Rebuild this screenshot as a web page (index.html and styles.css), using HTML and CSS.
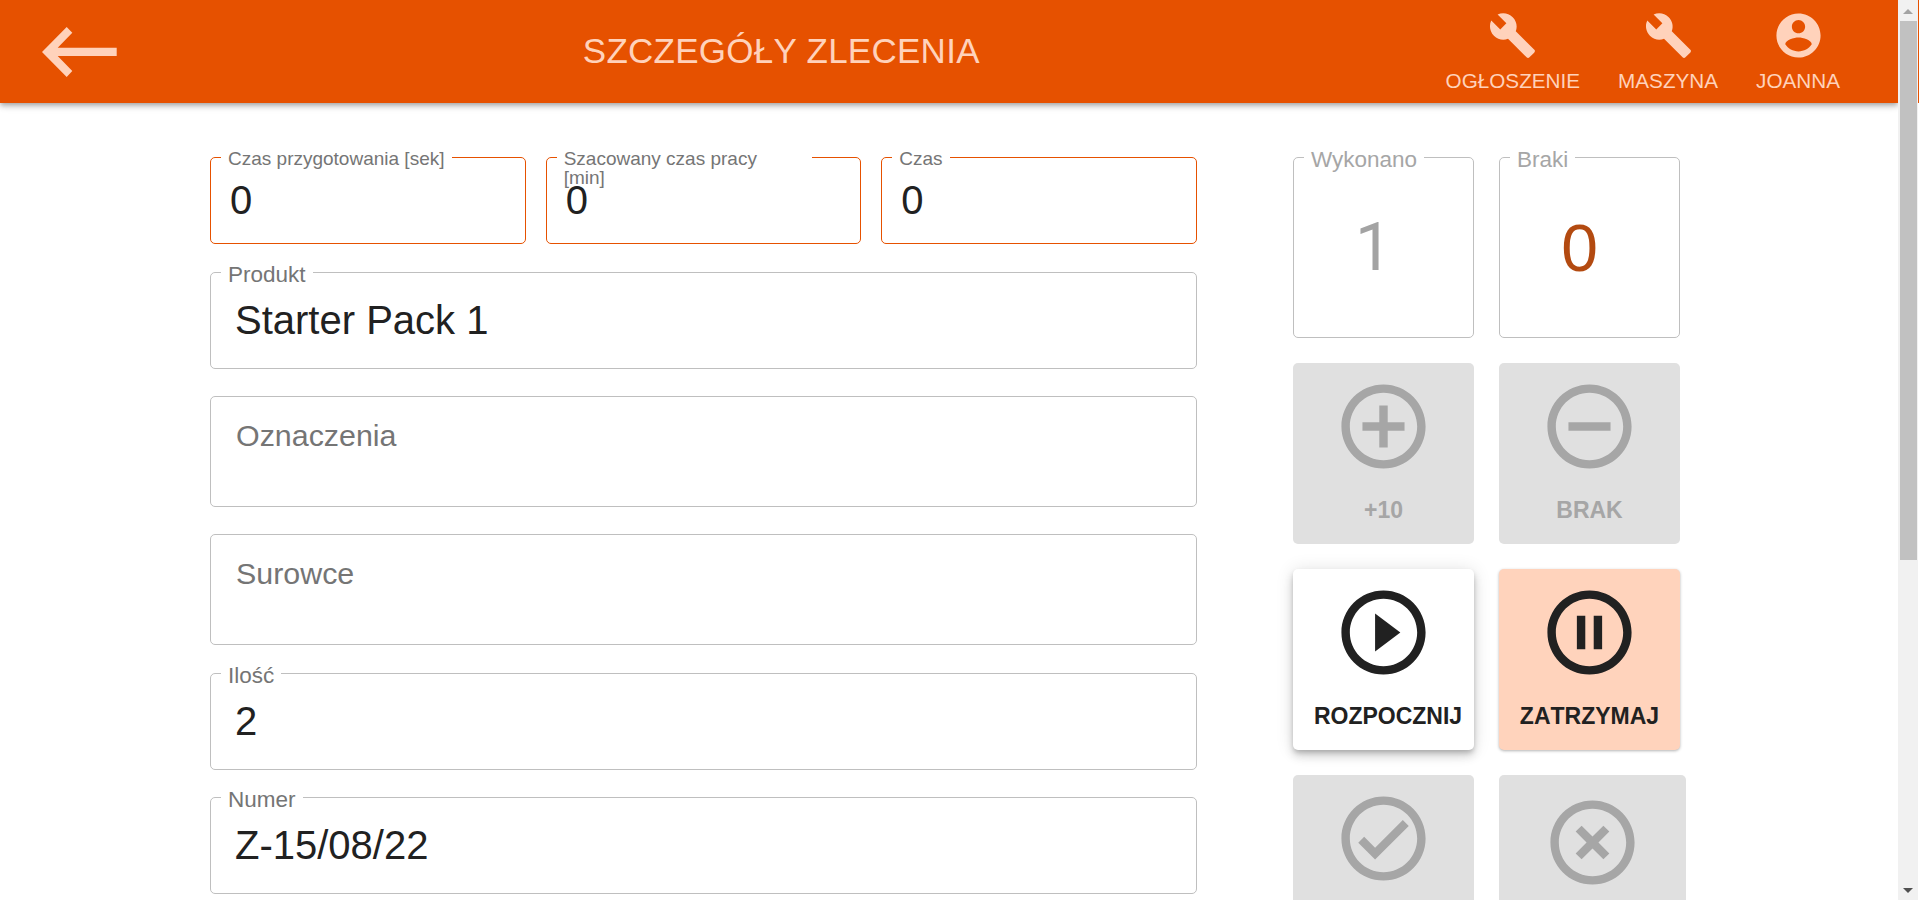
FILE: index.html
```html
<!DOCTYPE html>
<html lang="pl">
<head>
    <meta charset="UTF-8">
    <meta name="viewport" content="width=device-width, initial-scale=1.0">
    <title>Szczegóły zlecenia</title>
    <link rel="stylesheet" href="styles.css">
</head>
<body>
    <div class="window">
        <div class="page">
            <header class="app-bar">
                <button class="back-btn" aria-label="Wstecz">
                    <svg width="75" height="50" viewBox="22 16 75 50"><path d="M46.7 16l5.6 5.7-14.6 15h59v8.3h-59l14.6 15-5.6 6L22 41z"/></svg>
                </button>
                <h1 class="app-title">SZCZEGÓŁY ZLECENIA</h1>
                <nav class="app-nav">
                    <a class="nav-item">
                        <span class="nav-icon"><svg width="49" height="49" viewBox="0 0 24 24"><path d="M22.7 19l-9.1-9.1c.9-2.3.4-5-1.5-6.9-2-2-5-2.4-7.4-1.3L9 6 6 9 1.6 4.7C.4 7.1.9 10.1 2.9 12.1c1.9 1.9 4.6 2.4 6.9 1.5l9.1 9.1c.4.4 1 .4 1.4 0l2.3-2.3c.5-.4.5-1.1.1-1.4z"/></svg></span>
                        OGŁOSZENIE
                    </a>
                    <a class="nav-item">
                        <span class="nav-icon"><svg width="49" height="49" viewBox="0 0 24 24"><path d="M22.7 19l-9.1-9.1c.9-2.3.4-5-1.5-6.9-2-2-5-2.4-7.4-1.3L9 6 6 9 1.6 4.7C.4 7.1.9 10.1 2.9 12.1c1.9 1.9 4.6 2.4 6.9 1.5l9.1 9.1c.4.4 1 .4 1.4 0l2.3-2.3c.5-.4.5-1.1.1-1.4z"/></svg></span>
                        MASZYNA
                    </a>
                    <a class="nav-item">
                        <span class="nav-icon"><svg width="53" height="53" viewBox="0 0 24 24"><path d="M12 2C6.48 2 2 6.48 2 12s4.48 10 10 10 10-4.48 10-10S17.52 2 12 2zm0 3c1.66 0 3 1.34 3 3s-1.34 3-3 3-3-1.34-3-3 1.34-3 3-3zm0 14.2c-2.5 0-4.71-1.28-6-3.22.03-1.99 4-3.08 6-3.08 1.99 0 5.97 1.09 6 3.08-1.29 1.94-3.5 3.22-6 3.22z"/></svg></span>
                        JOANNA
                    </a>
                </nav>
            </header>

            <main class="content">
                <section class="form-col">
                    <div class="field-row">
                        <div class="field field-time">
                            <span class="field-value">0</span>
                            <span class="field-label">Czas przygotowania [sek]</span>
                        </div>
                        <div class="field field-time">
                            <span class="field-value">0</span>
                            <span class="field-label label-wrapped">Szacowany czas pracy<br>[min]</span>
                        </div>
                        <div class="field field-time">
                            <span class="field-value">0</span>
                            <span class="field-label">Czas</span>
                        </div>
                    </div>
                    <div class="field">
                        <span class="field-value">Starter Pack 1</span>
                        <span class="field-label">Produkt</span>
                    </div>
                    <div class="field field-multi">Oznaczenia</div>
                    <div class="field field-multi">Surowce</div>
                    <div class="field">
                        <span class="field-value">2</span>
                        <span class="field-label">Ilość</span>
                    </div>
                    <div class="field">
                        <span class="field-value">Z-15/08/22</span>
                        <span class="field-label">Numer</span>
                    </div>
                </section>

                <section class="side-col">
                    <div class="tile-row">
                        <div class="stat">
                            <span class="stat-value stat-done">1</span>
                            <span class="stat-label">Wykonano</span>
                        </div>
                        <div class="stat">
                            <span class="stat-value stat-bad">0</span>
                            <span class="stat-label">Braki</span>
                        </div>
                    </div>
                    <div class="tile-row">
                        <button class="action">
                            <svg width="101" height="101" viewBox="0 0 24 24"><path d="M13 7h-2v4H7v2h4v4h2v-4h4v-2h-4V7zm-1-5C6.48 2 2 6.48 2 12s4.48 10 10 10 10-4.48 10-10S17.52 2 12 2zm0 18c-4.41 0-8-3.59-8-8s3.59-8 8-8 8 3.59 8 8-3.59 8-8 8z"/></svg>
                            <span class="action-label">+10</span>
                        </button>
                        <button class="action">
                            <svg width="101" height="101" viewBox="0 0 24 24"><path d="M7 11v2h10v-2H7zm5-9C6.48 2 2 6.48 2 12s4.48 10 10 10 10-4.48 10-10S17.52 2 12 2zm0 18c-4.41 0-8-3.59-8-8s3.59-8 8-8 8 3.59 8 8-3.59 8-8 8z"/></svg>
                            <span class="action-label">BRAK</span>
                        </button>
                    </div>
                    <div class="tile-row">
                        <button class="action action-start">
                            <svg width="101" height="101" viewBox="0 0 24 24"><path d="M10 16.5l6-4.5-6-4.5v9zM12 2C6.48 2 2 6.48 2 12s4.48 10 10 10 10-4.48 10-10S17.52 2 12 2zm0 18c-4.41 0-8-3.59-8-8s3.59-8 8-8 8 3.59 8 8-3.59 8-8 8z"/></svg>
                            <span class="action-label">ROZPOCZNIJ</span>
                        </button>
                        <button class="action action-pause">
                            <svg width="101" height="101" viewBox="0 0 24 24"><path d="M9 16h2V8H9v8zm3-14C6.48 2 2 6.48 2 12s4.48 10 10 10 10-4.48 10-10S17.52 2 12 2zm0 18c-4.41 0-8-3.59-8-8s3.59-8 8-8 8 3.59 8 8-3.59 8-8 8zm1-4h2V8h-2v8z"/></svg>
                            <span class="action-label">ZATRZYMAJ</span>
                        </button>
                    </div>
                    <div class="tile-row">
                        <button class="action">
                            <svg width="101" height="101" viewBox="0 0 24 24"><path d="M12 2C6.48 2 2 6.48 2 12s4.48 10 10 10 10-4.48 10-10S17.52 2 12 2zm0 18c-4.41 0-8-3.59-8-8s3.59-8 8-8 8 3.59 8 8-3.59 8-8 8zm4.59-12.42L10 14.17l-2.59-2.58L6 13l4 4 8-8z"/></svg>
                        </button>
                        <button class="action action-wide">
                            <svg width="101" height="101" viewBox="0 0 24 24"><path d="M14.59 8L12 10.59 9.41 8 8 9.41 10.59 12 8 14.59 9.41 16 12 13.41 14.59 16 16 14.59 13.41 12 16 9.41 14.59 8zM12 2C6.47 2 2 6.47 2 12s4.47 10 10 10 10-4.47 10-10S17.53 2 12 2zm0 18c-4.41 0-8-3.59-8-8s3.59-8 8-8 8 3.59 8 8-3.59 8-8 8z"/></svg>
                        </button>
                    </div>
                </section>
            </main>
        </div>

        <div class="scrollbar">
            <span class="arrow-up"></span>
            <span class="scroll-thumb"></span>
            <span class="arrow-down"></span>
        </div>
        <div class="edge"></div>
    </div>
</body>
</html>
```

FILE: styles.css
```css
* {
    margin: 0;
    padding: 0;
    box-sizing: border-box;
}

body {
    font-family: 'Liberation Sans', Arial, sans-serif;
    background: #fff;
    color: #212121;
}

.window {
    display: flex;
    height: 900px;
    overflow: hidden;
}

.page {
    flex: 1;
    min-width: 0;
}

/* app bar */
.app-bar {
    display: flex;
    align-items: center;
    height: 103px;
    background: #e65100;
    color: #ffd2bb;
    box-shadow: 0 2px 4px -1px rgba(0, 0, 0, 0.2), 0 4px 5px rgba(0, 0, 0, 0.14), 0 1px 10px rgba(0, 0, 0, 0.12);
    position: relative;
}

.app-bar svg {
    display: block;
    fill: currentColor;
}

.back-btn {
    margin-left: 42px;
    background: none;
    border: none;
    color: inherit;
}

.app-title {
    flex: 1;
    padding-bottom: 2px;
    text-align: center;
    font-size: 35px;
    font-weight: 400;
    letter-spacing: 0.0075em;
}

.app-nav {
    display: flex;
    align-self: flex-start;
    gap: 38px;
    padding-right: 58px;
}

.nav-item {
    display: flex;
    flex-direction: column;
    align-items: center;
    font-size: 20.7px;
    line-height: 23px;
}

.nav-icon {
    display: flex;
    align-items: center;
    justify-content: center;
    height: 54px;
    margin: 8px 0 7px;
}

/* main layout */
.content {
    display: flex;
    gap: 96px;
    padding: 54px 0 0 210px;
}

.form-col {
    display: flex;
    flex-direction: column;
    gap: 27.5px;
    width: 987px;
    flex-shrink: 0;
}

.field-row {
    display: grid;
    grid-template-columns: repeat(3, 1fr);
    gap: 20px;
}

.field {
    position: relative;
    display: flex;
    align-items: center;
    height: 97px;
    padding-left: 24px;
    border: 1px solid #bfbfbf;
    border-radius: 5px;
    font-size: 40px;
}

.field-time {
    height: 87px;
    padding-left: 19px;
    border-color: #e65100;
}

.field-multi {
    align-items: flex-start;
    height: 110.75px;
    padding-top: 20px;
    padding-left: 25px;
    font-size: 30.4px;
    line-height: 36px;
    color: #757575;
}

.field-label {
    position: absolute;
    top: -11px;
    left: 10px;
    padding: 0 7px;
    font-size: 22.5px;
    line-height: 26px;
    color: #757575;
    white-space: nowrap;
    background: #fff;
}

.field-time .field-label {
    top: -9px;
    font-size: 19px;
    line-height: 19px;
}

/* the notch keeps the width of the one-line text, the text itself wraps */
.field-time .label-wrapped {
    width: 255px;
    background: linear-gradient(#fff, #fff) no-repeat 0 0 / 100% 19px;
}

/* side tiles */
.side-col {
    display: flex;
    flex-direction: column;
    gap: 25px;
    width: 393px;
    flex-shrink: 0;
}

.tile-row {
    display: flex;
    gap: 25px;
}

.stat {
    position: relative;
    display: flex;
    align-items: center;
    justify-content: center;
    width: 181px;
    height: 181px;
    padding-right: 20px;
    border: 1px solid #bfbfbf;
    border-radius: 5px;
}

.stat-value {
    font-size: 66px;
    color: #a3a3a3;
}

/* Roboto's one has no foot, like the reference */
.stat-done {
    font-family: Roboto, sans-serif;
}

.stat-bad {
    color: #b34a10;
}

.stat-label {
    position: absolute;
    top: -11px;
    left: 10px;
    padding: 0 7px;
    font-size: 22.5px;
    line-height: 26px;
    color: #a6a6a6;
    background: #fff;
}

.action {
    display: flex;
    flex-direction: column;
    align-items: center;
    flex-shrink: 0;
    width: 181px;
    height: 181px;
    padding-top: 13px;
    border: none;
    border-radius: 5px;
    background: #e0e0e0;
    color: #a6a6a6;
    font-family: inherit;
}

.action svg {
    display: block;
    margin-right: 1px;
    fill: currentColor;
}

.action-label {
    margin-top: 20px;
    font-size: 23px;
    font-weight: 700;
    font-kerning: none;
    line-height: 26px;
}

.action-start {
    background: #fff;
    color: #212121;
    box-shadow: 0 3px 5px -1px rgba(0, 0, 0, 0.2), 0 6px 10px rgba(0, 0, 0, 0.14), 0 1px 18px rgba(0, 0, 0, 0.12);
}

.action-start .action-label {
    padding-left: 9px;
}

.action-pause {
    background: #ffd3bc;
    color: #212121;
    box-shadow: 0 1px 3px rgba(0, 0, 0, 0.3);
}

.action-wide {
    width: 187px;
    padding-top: 17px;
}

/* window scrollbar */
.scrollbar {
    position: relative;
    display: flex;
    flex-direction: column;
    align-items: center;
    width: 20px;
    flex-shrink: 0;
    background: #f1f1f1;
}

.arrow-up {
    margin-top: 9px;
    border: 5px solid transparent;
    border-top: none;
    border-bottom-color: #a3a3a3;
}

.scroll-thumb {
    width: 17px;
    height: 539px;
    margin-top: 7px;
    margin-left: 1px;
    background: #c1c1c1;
}

.arrow-down {
    margin-top: auto;
    margin-bottom: 7px;
    border: 5px solid transparent;
    border-bottom: none;
    border-top-color: #505050;
}

.edge {
    width: 1px;
    height: 103px;
    flex-shrink: 0;
    background: #e65100;
}
```
